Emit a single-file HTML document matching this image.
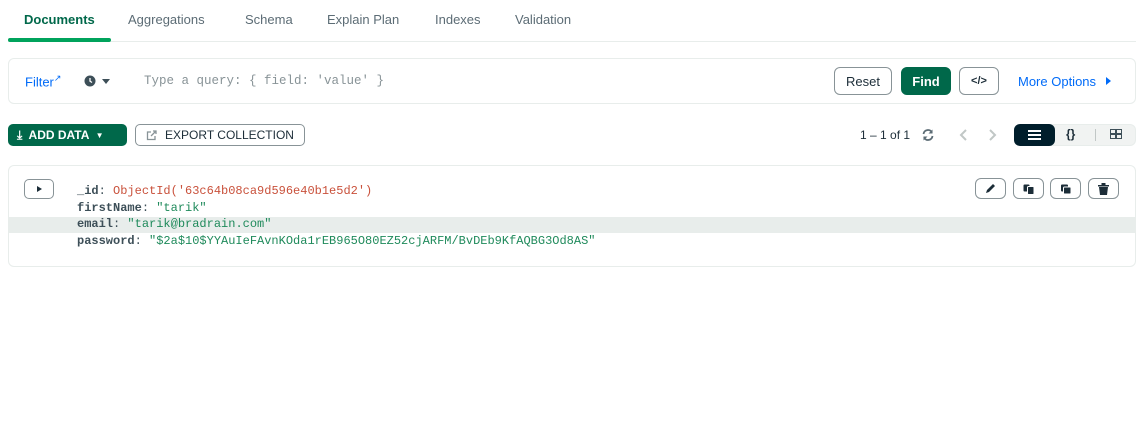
<!DOCTYPE html>
<html><head><style>
*{box-sizing:border-box;margin:0;padding:0}
body{width:1145px;height:446px;background:#fff;font-family:"Liberation Sans",sans-serif;position:relative;overflow:hidden;color:#1c2d38}
.abs{position:absolute}
.tab{position:absolute;top:12px;font-size:13px;color:#5c6c75}
.mono{font-family:"Liberation Mono",monospace;font-size:12px}
.btn{position:absolute;border:1px solid #889397;border-radius:6px;background:#fff;display:flex;align-items:center;justify-content:center;font-size:13px}
.ib{position:absolute;top:178px;width:31px;height:21px;border:1px solid #889397;border-radius:6px;background:#fff;display:flex;align-items:center;justify-content:center}
</style></head><body>
<div class="tab" style="left:24px;color:#00684a;font-weight:bold">Documents</div>
<div class="tab" style="left:128px">Aggregations</div>
<div class="tab" style="left:245px">Schema</div>
<div class="tab" style="left:327px">Explain Plan</div>
<div class="tab" style="left:435px">Indexes</div>
<div class="tab" style="left:515px">Validation</div>
<div class="abs" style="left:8px;top:41px;width:1128px;height:1px;background:#e8edeb"></div>
<div class="abs" style="left:8px;top:38px;width:103px;height:4px;background:#00a35c;border-radius:2px"></div>

<div class="abs" style="left:8px;top:58px;width:1128px;height:46px;border:1px solid #e8edeb;border-radius:6px"></div>
<div class="abs" style="left:25px;top:73px;font-size:13px;color:#016bf8">Filter<sup style="font-size:9px">↗</sup></div>
<svg class="abs" style="left:84px;top:75px" width="12" height="12" viewBox="0 0 12 12"><circle cx="6" cy="6" r="5.5" fill="#3d4f58"/><path d="M6 3v3.2l2 1.3" stroke="#fff" stroke-width="1.3" fill="none"/></svg>
<div class="abs" style="left:102px;top:79px;border:4px solid transparent;border-top:5px solid #3d4f58;border-bottom:0"></div>
<div class="abs mono" style="left:144px;top:74px;font-size:12.5px;color:#889397">Type a query: { field: 'value' }</div>
<div class="btn" style="left:834px;top:67px;width:58px;height:28px">Reset</div>
<div class="btn" style="left:901px;top:67px;width:50px;height:28px;background:#00684a;border-color:#00684a;color:#fff;font-weight:bold">Find</div>
<div class="btn" style="left:959px;top:67px;width:40px;height:28px;font-size:11px;font-weight:bold">&lt;/&gt;</div>
<div class="abs" style="left:1018px;top:74px;font-size:13px;color:#016bf8">More Options</div>
<div class="abs" style="left:1106px;top:77px;border:4px solid transparent;border-left:5px solid #016bf8;border-right:0"></div>

<div class="abs" style="left:8px;top:124px;width:119px;height:22px;background:#00684a;border-radius:5px;color:#fff;font-size:12px;font-weight:bold;display:flex;align-items:center;padding-left:9px">⤓&nbsp; ADD DATA &nbsp;<span style="font-size:8px">▼</span></div>
<div class="btn" style="left:135px;top:124px;width:170px;height:22px;font-size:12px;border-radius:5px"><svg width="11" height="11" viewBox="0 0 11 11" style="margin-right:8px"><path d="M5 2H1.5v7.5H9V6M5 6l5-5M7 1h3v3" stroke="#889397" stroke-width="1.3" fill="none"/></svg>EXPORT COLLECTION</div>

<div class="abs" style="left:860px;top:128px;font-size:12px">1 – 1 of 1</div>
<svg class="abs" style="left:921px;top:128px" width="14" height="14" viewBox="0 0 14 14"><path d="M2.5 6A4.5 4.5 0 0 1 11 4.5M11.5 8A4.5 4.5 0 0 1 3 9.5" stroke="#5c6c75" stroke-width="1.8" fill="none"/><path d="M11.5 1.5v4h-4zM2.5 12.5v-4h4z" fill="#5c6c75"/></svg>
<svg class="abs" style="left:959px;top:129px" width="10" height="12"><path d="M7 1L2 6l5 5" stroke="#c1c7c6" stroke-width="2" fill="none"/></svg>
<svg class="abs" style="left:987px;top:129px" width="10" height="12"><path d="M3 1l5 5-5 5" stroke="#c1c7c6" stroke-width="2" fill="none"/></svg>
<div class="abs" style="left:1014px;top:124px;width:122px;height:22px;border-radius:6px;background:#f1f3f2;border:1px solid #e8edeb"></div>
<div class="abs" style="left:1014px;top:124px;width:41px;height:22px;border-radius:6px;background:#001e2b"></div>
<svg class="abs" style="left:1028px;top:130px" width="13" height="10"><path d="M0 1h13M0 5h13M0 9h13" stroke="#fff" stroke-width="2"/></svg>
<div class="abs" style="left:1066px;top:127px;font-size:12px;font-weight:bold;color:#1c2d38">{}</div>
<div class="abs" style="left:1095px;top:129px;width:1px;height:12px;background:#c1c7c6"></div>
<div class="abs" style="left:1110px;top:129px;width:12px;height:10px;border:1.5px solid #3d4f58"></div>
<div class="abs" style="left:1115px;top:129px;width:1.5px;height:10px;background:#3d4f58"></div>
<div class="abs" style="left:1110px;top:133px;width:12px;height:1.5px;background:#3d4f58"></div>

<div class="abs" style="left:8px;top:165px;width:1128px;height:102px;border:1px solid #e8edeb;border-radius:6px"></div>
<div class="abs" style="left:9px;top:217px;width:1126px;height:16px;background:#e8edeb"></div>
<div class="btn" style="left:24px;top:179px;width:30px;height:20px;border-radius:5px"><div style="border:3.5px solid transparent;border-left:5px solid #1c2d38;border-right:0"></div></div>
<div class="ib" style="left:975px"><svg width="11" height="11"><path d="M1 10l1-3 6-6 2 2-6 6z" fill="#1c2d38"/></svg></div>
<div class="ib" style="left:1013px"><svg width="12" height="12"><rect x="0.5" y="1.5" width="6" height="7" rx="1" fill="#1c2d38"/><rect x="4.5" y="3.5" width="6.5" height="8" rx="1" fill="#1c2d38" stroke="#fff"/></svg></div>
<div class="ib" style="left:1050px"><svg width="12" height="12"><rect x="1" y="1.5" width="7" height="7" rx="1" fill="#1c2d38"/><rect x="3.5" y="4" width="7.5" height="7" rx="1" fill="#1c2d38" stroke="#fff"/></svg></div>
<div class="ib" style="left:1088px"><svg width="11" height="12"><path d="M0 2h11v1.5H0zM3.5 0h4v2h-4zM1 4h9l-1 8H2z" fill="#1c2d38"/></svg></div>
<div class="abs mono" style="left:77px;top:183px;line-height:16.7px;color:#3d4f58;white-space:pre"><b>_id</b>: <span style="color:#c9513b">ObjectId('63c64b08ca9d596e40b1e5d2')</span>
<b>firstName</b>: <span style="color:#1f8a5b">"tarik"</span>
<b>email</b>: <span style="color:#1f8a5b">"tarik@bradrain.com"</span>
<b>password</b>: <span style="color:#1f8a5b">"$2a$10$YYAuIeFAvnKOda1rEB965O80EZ52cjARFM/BvDEb9KfAQBG3Od8AS"</span></div>
</body></html>
